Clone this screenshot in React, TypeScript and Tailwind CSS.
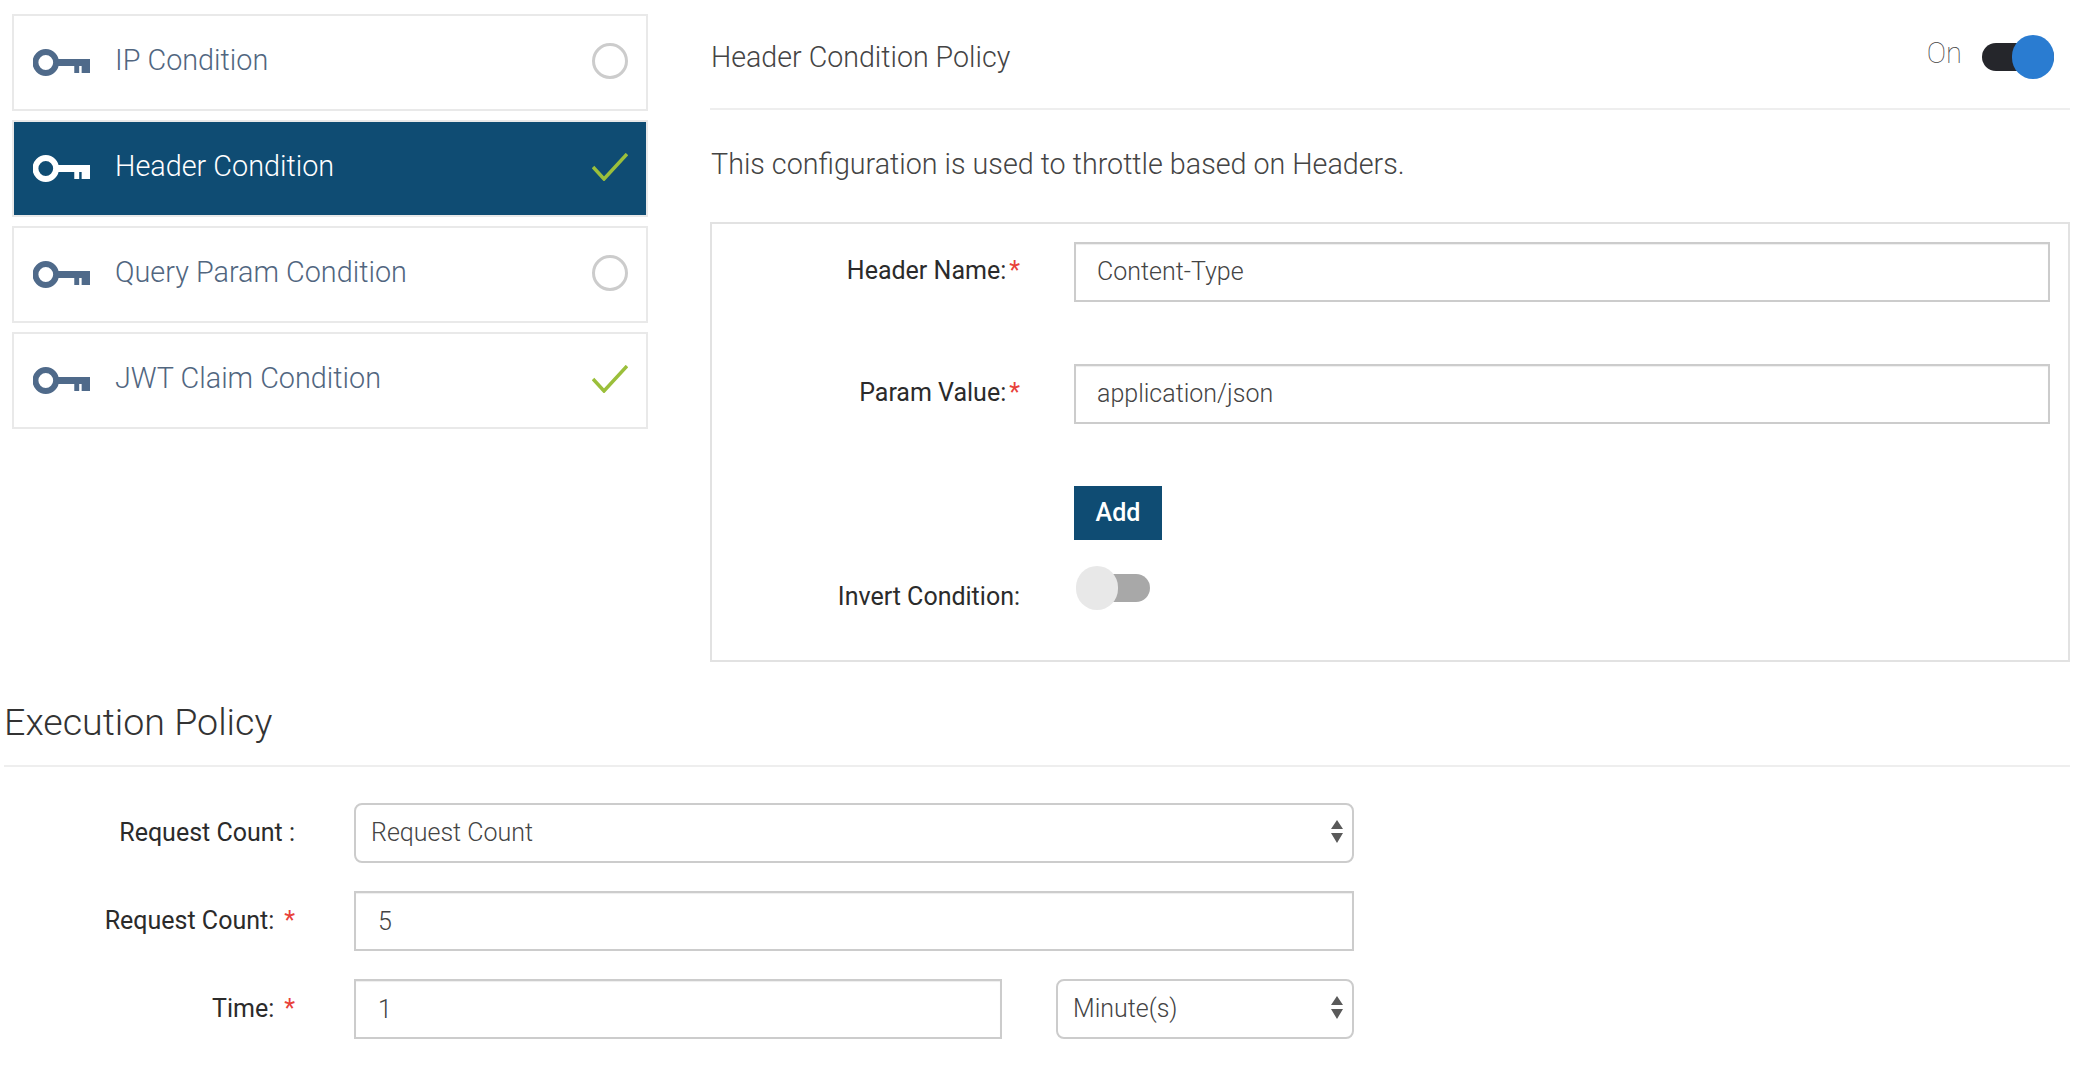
const conditions = [
  { name: 'IP Condition', done: false, active: false },
  { name: 'Header Condition', done: true, active: true },
  { name: 'Query Param Condition', done: false, active: false },
  { name: 'JWT Claim Condition', done: true, active: false },
];

function KeyIcon({ className }: { className: string }) {
  return (
    <svg viewBox="0 0 58 27" className={`w-[57px] h-[27px] shrink-0 ${className}`} fill="currentColor" preserveAspectRatio="none">
      <path fillRule="evenodd" d="M13 0a13.5 13.5 0 1 0 0 27a13.5 13.5 0 0 0 0-27zM13 6a7.500 7.500 0 1 1 0 15a7.500 7.500 0 0 1 0-15z" />
      <path d="M25 10h33v14h-8.500v-7h-2.500v7h-5v-7h-17z" />
    </svg>
  );
}

function Check() {
  return (
    <svg viewBox="0 0 36 28" className="w-9 h-7 mb-[3px]" fill="none" stroke="#9bbf3b" strokeWidth="3.5">
      <path d="M1 14l11 12L35 1" />
    </svg>
  );
}

function Arrows() {
  return (
    <svg viewBox="0 0 12 23" className="absolute right-[11px] top-[17px] w-3 h-[23px] pointer-events-none" fill="#5a5a5a">
      <path d="M6 0l6 9H0zM0 13h12l-6 10z" />
    </svg>
  );
}

function Req() {
  return <span className="text-[#e8413a]">*</span>;
}

const inputCls =
  'w-full h-[60px] border-2 border-[#cccccc] px-[21px] pb-[2px] text-[25px] font-light text-[#444] bg-white outline-none shadow-[inset_0_1px_1px_rgba(0,0,0,0.07)]';
const selectCls =
  'w-full h-[60px] appearance-none border-2 border-[#cccccc] rounded-[8px] pl-[15px] pr-8 text-[25px] font-light text-[#444] bg-white outline-none';
const labelCls = 'text-[25px] text-[#2b2b2b] text-right';

export default function App() {
  return (
    <div className="w-[2084px] h-[1074px] overflow-hidden bg-white font-['Roboto',sans-serif]">
      <div className="flex items-start pl-3 pr-[14px] pt-[14px]">
        {/* condition list */}
        <div className="w-[636px] flex flex-col gap-[9px]">
          {conditions.map((c) => (
            <div
              key={c.name}
              className={`h-[97px] border-2 border-[#e9e9e9] bg-clip-padding flex items-center pl-[19px] pr-[18px] ${
                c.active ? 'bg-[#0f4c73] text-white' : 'bg-white text-[#51667f]'
              }`}
            >
              <KeyIcon className={c.active ? 'text-white' : 'text-[#4f6a8a]'} />
              <span className="ml-[25px] mb-[3px] text-[28.8px] font-light flex-1">{c.name}</span>
              {c.done ? <Check /> : <div className="w-9 h-9 mb-[4px] rounded-full border-[3px] border-[#cccccc]" />}
            </div>
          ))}
        </div>

        {/* policy panel */}
        <div className="ml-[62px] flex-1 -mt-[14px]">
          <div className="h-[110px] pt-[5px] border-b-2 border-[#eeeeee] flex items-center justify-between">
            <span className="mt-[2px] ml-[1px] text-[28.6px] font-light text-[#444]">Header Condition Policy</span>
            <div className="flex items-center pr-4">
              <span className="mb-[5px] text-[29px] font-thin text-[#444] mr-[20px]">On</span>
              <div className="relative w-[72px] h-[28px] rounded-full bg-[#25262b]">
                <div className="absolute -right-0 -top-2 w-[42px] h-[44px] rounded-full bg-[#2a7cd1]" />
              </div>
            </div>
          </div>
          <p className="mt-[34px] mb-[38px] ml-[1px] text-[28.7px] leading-[40px] font-light text-[#444]">
            This configuration is used to throttle based on Headers.
          </p>
          <div className="h-[440px] border-2 border-[#e2e2e2] pt-[18px] pr-[18px] grid grid-cols-[308px_1fr] gap-x-[54px] content-start">
            <label className={`${labelCls} h-[60px] leading-[57px]`}>
              Header Name:<span className="ml-[3px]"><Req /></span>
            </label>
            <input className={inputCls} defaultValue="Content-Type" readOnly />
            <label className={`${labelCls} mt-[62px] h-[60px] leading-[57px]`}>
              Param Value:<span className="ml-[3px]"><Req /></span>
            </label>
            <input className={`${inputCls} mt-[62px]`} defaultValue="application/json" readOnly />
            <div />
            <div className="mt-[62px]">
              <button className="w-[88px] h-[54px] bg-[#0f4c73] text-white text-[25px] font-medium">Add</button>
            </div>
            <label className={`${labelCls} mt-[38px]`}>Invert Condition:</label>
            <div className="mt-[26px] ml-[2px] relative w-[74px] h-[44px]">
              <div className="absolute right-0 top-2 w-[50px] h-[28px] rounded-r-full bg-[#a8a8a8]" />
              <div className="absolute left-0 top-0 w-[42px] h-[44px] rounded-full bg-[#e8e8e8]" />
            </div>
          </div>
        </div>
      </div>

      {/* execution policy */}
      <div className="ml-1 mr-[14px] mt-[38px] h-[67px] border-b-2 border-[#eeeeee]">
        <h2 className="text-[37.6px] leading-[44px] font-light text-[#333]">Execution Policy</h2>
      </div>
      <div className="mt-[36px] ml-[10px] w-[1344px] grid grid-cols-[285px_1fr] gap-x-[59px] gap-y-[28px]">
        <label className={`${labelCls} leading-[59px]`}>Request Count :</label>
        <div className="relative">
          <select className={selectCls} defaultValue="Request Count">
            <option>Request Count</option>
          </select>
          <Arrows />
        </div>
        <label className={`${labelCls} leading-[59px]`}>
          Request Count:<span className="ml-[10px]"><Req /></span>
        </label>
        <input className={`${inputCls} !pl-[22px] !pb-0`} defaultValue="5" readOnly />
        <label className={`${labelCls} leading-[59px]`}>
          Time:<span className="ml-[10px]"><Req /></span>
        </label>
        <div className="flex justify-between">
          <input className={`${inputCls} !pl-[22px] !pb-0 !w-[648px]`} defaultValue="1" readOnly />
          <div className="relative w-[298px]">
            <select className={selectCls} defaultValue="Minute(s)">
              <option>Minute(s)</option>
            </select>
            <Arrows />
          </div>
        </div>
      </div>
    </div>
  );
}
